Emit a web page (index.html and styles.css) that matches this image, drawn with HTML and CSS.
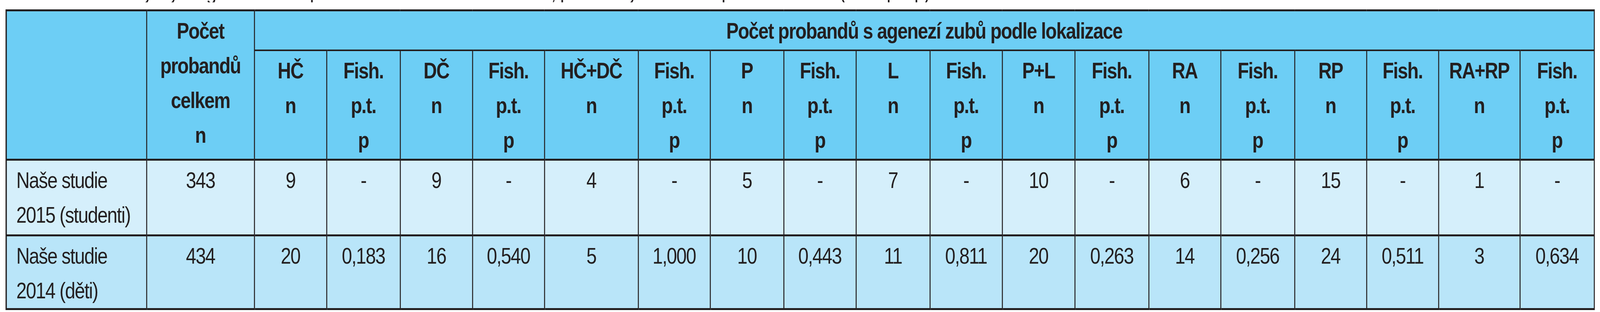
FILE: index.html
```html
<!DOCTYPE html>
<html lang="cs">
<head>
<meta charset="utf-8">
<title>Počet probandů s agenezí zubů podle lokalizace</title>
<link rel="stylesheet" href="styles.css">
</head>
<body>
<div class="frame">
<div class="page">
  <div class="caption-clip">
    <p class="caption">Tab. 4. Srovnání výskytu ageneze zubů podle lokalizace v obou studiích, p-hodnoty Fisherova přesného testu (Fish. p.t. p)</p>
  </div>
  <table class="agenesis">
    <colgroup>
      <col class="c-label"><col class="c-total">
      <col class="c-n"><col class="c-p1">
      <col class="c-n"><col class="c-p2">
      <col class="c-wide"><col class="c-p2">
      <col class="c-p1"><col class="c-n">
      <col class="c-p3"><col class="c-n">
      <col class="c-n2"><col class="c-p3">
      <col class="c-p2"><col class="c-p3">
      <col class="c-p2"><col class="c-p2">
      <col class="c-rarp"><col class="c-last">
    </colgroup>
    <thead>
      <tr class="head-top">
        <th rowspan="2" class="label-cell"></th>
        <th rowspan="2">Počet<br>probandů<br>celkem<br>n</th>
        <th colspan="18">Počet probandů s agenezí zubů podle lokalizace</th>
      </tr>
      <tr class="head-sub">
        <th>HČ<br>n</th><th>Fish.<br>p.t.<br>p</th>
        <th>DČ<br>n</th><th>Fish.<br>p.t.<br>p</th>
        <th>HČ+DČ<br>n</th><th>Fish.<br>p.t.<br>p</th>
        <th>P<br>n</th><th>Fish.<br>p.t.<br>p</th>
        <th>L<br>n</th><th>Fish.<br>p.t.<br>p</th>
        <th>P+L<br>n</th><th>Fish.<br>p.t.<br>p</th>
        <th>RA<br>n</th><th>Fish.<br>p.t.<br>p</th>
        <th>RP<br>n</th><th>Fish.<br>p.t.<br>p</th>
        <th>RA+RP<br>n</th><th>Fish.<br>p.t.<br>p</th>
      </tr>
    </thead>
    <tbody>
      <tr class="row-a">
        <td class="label-cell">Naše studie<br>2015 (studenti)</td>
        <td>343</td>
        <td>9</td><td>-</td>
        <td>9</td><td>-</td>
        <td>4</td><td>-</td>
        <td>5</td><td>-</td>
        <td>7</td><td>-</td>
        <td>10</td><td>-</td>
        <td>6</td><td>-</td>
        <td>15</td><td>-</td>
        <td>1</td><td>-</td>
      </tr>
      <tr class="row-b">
        <td class="label-cell">Naše studie<br>2014 (děti)</td>
        <td>434</td>
        <td>20</td><td>0,183</td>
        <td>16</td><td>0,540</td>
        <td>5</td><td>1,000</td>
        <td>10</td><td>0,443</td>
        <td>11</td><td>0,811</td>
        <td>20</td><td>0,263</td>
        <td>14</td><td>0,256</td>
        <td>24</td><td>0,511</td>
        <td>3</td><td>0,634</td>
      </tr>
    </tbody>
  </table>
</div>
</div>
</body>
</html>
```

FILE: styles.css
```css
html, body {
  margin: 0;
  padding: 0;
  background: #ffffff;
}

html {
  overflow: hidden;
}

body {
  font-family: "Liberation Sans", Arial, sans-serif;
  color: #231f20;
}

/* clips the unscaled layout box so nothing scrolls sideways */
.frame {
  width: 100%;
  overflow: hidden;
}

/* The page is laid out for a 4914px wide frame and fitted to the actual
   viewport width (ratio = 100vw / 4914px). */
.page {
  box-sizing: border-box;
  width: 4914px;
  padding-left: 17px;
  transform-origin: 0 0;
  transform: scaleX(tan(atan2(100vw, 4914px)));
}

/* only the descenders of the caption line above the table are visible */
.caption-clip {
  height: 6px;
  overflow: hidden;
}

.caption {
  margin: -52px 0 0 0;
  font-size: 57px;
  line-height: 60px;
  letter-spacing: -2px;
  white-space: nowrap;
}

.agenesis {
  margin-top: 18px;
  border-collapse: collapse;
  table-layout: fixed;
  width: 4880px;
}

.c-label { width: 431px; }
.c-total { width: 331px; }
.c-n { width: 222px; }
.c-p1 { width: 226px; }
.c-p2 { width: 221px; }
.c-p3 { width: 227px; }
.c-n2 { width: 223px; }
.c-wide { width: 288px; }
.c-rarp { width: 250px; }
.c-last { width: 228px; }

.agenesis th,
.agenesis td {
  border: 3px solid #231f20;
  padding: 6px 0 0 0;
  vertical-align: top;
  text-align: center;
  font-size: 57px;
  line-height: 89px;
  letter-spacing: -2px;
  white-space: nowrap;
}

.agenesis th {
  font-weight: bold;
  background: #6dcef5;
}

.agenesis .label-cell {
  border-left-width: 4px;
  text-align: left;
  padding-left: 29px;
}

.head-top {
  height: 102px;
}

.head-top th {
  border-top-width: 5px;
}

.head-sub {
  height: 281px;
}

.head-sub th {
  border-top-width: 4px;
  border-bottom-width: 5px;
}

.row-a {
  height: 194px;
}

.row-a td {
  background: #d5effb;
  border-top-width: 5px;
}

.row-b {
  height: 189px;
}

.row-b td {
  background: #b9e5f9;
  border-top-width: 5px;
  border-bottom-width: 5px;
}
```
